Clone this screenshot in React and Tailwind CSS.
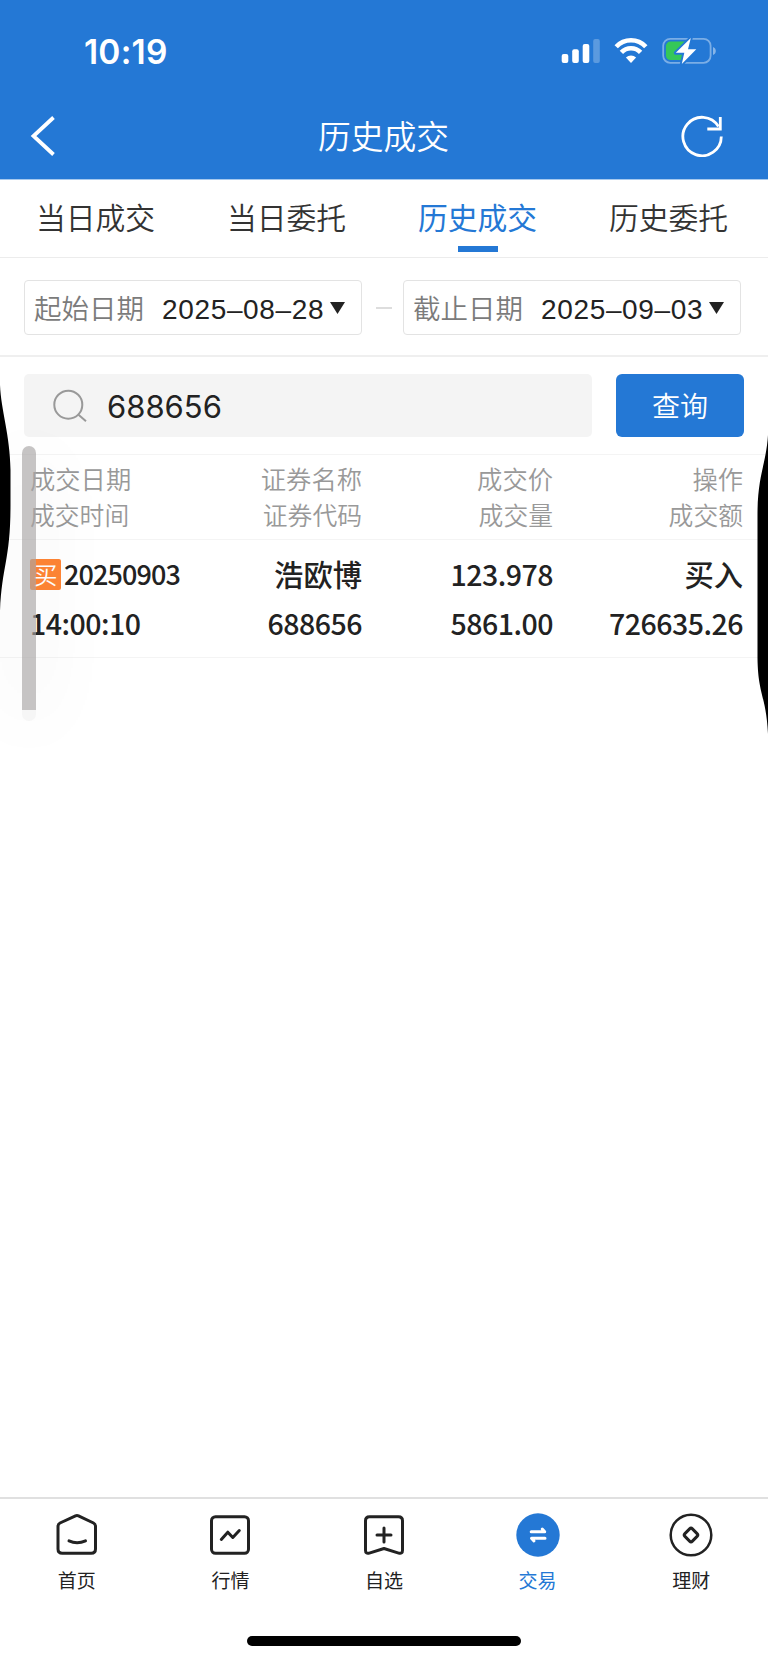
import clsx from 'clsx';

const tabs = ['当日成交', '当日委托', '历史成交', '历史委托'];

const columns = [
  { top: '成交日期', bottom: '成交时间' },
  { top: '证券名称', bottom: '证券代码' },
  { top: '成交价', bottom: '成交量' },
  { top: '操作', bottom: '成交额' },
];

const gridCols = 'grid grid-cols-[171px_161px_191px_190px] pl-[30px] pr-[25px]';

function StatusBar() {
  return (
    <div className="flex h-[94px] items-start justify-between pl-[84px] pr-[51px] text-white">
      <span className="mt-[32px] font-['Inter'] text-[33.5px] leading-[40px] font-semibold tracking-[0.2px]">10:19</span>
      <div className="mt-[36px] flex">
        <svg className="h-[30px] w-[40px]" viewBox="0 0 40 30" fill="currentColor">
          <rect x="0.7" y="18" width="6.6" height="9" rx="2" />
          <rect x="11.2" y="13.3" width="6.6" height="13.7" rx="2" />
          <rect x="21.7" y="8" width="6.6" height="19" rx="2" />
          <rect x="32.2" y="3" width="6.6" height="24" rx="2" opacity="0.25" />
        </svg>
        <svg className="ml-[12px] h-[30px] w-[36px]" viewBox="0 0 36 30" fill="none" stroke="currentColor" strokeWidth="4.6">
          <path d="M3.2 10.7a20.3 20.3 0 0 1 29.6 0" />
          <path d="M8.4 16.4a13.2 13.2 0 0 1 19.2 0" />
          <path d="M12.9 21.6a7.3 7.3 0 0 1 10.2 0L18 27z" fill="currentColor" stroke="none" />
        </svg>
        <svg className="ml-[13px] h-[30px] w-[55px]" viewBox="0 0 55 30" fill="none">
          <rect x="1.2" y="2.8" width="47.4" height="24" rx="7" stroke="#fff" strokeOpacity="0.4" strokeWidth="1.8" />
          <path d="M51 11v8c1.8-.7 2.8-2.2 2.8-4s-1-3.3-2.8-4z" fill="#fff" fillOpacity="0.45" />
          <rect x="3.9" y="5.6" width="24" height="18.5" rx="4.5" fill="#35c759" />
          <path d="M28.8 2 13.8 16.8h8.5L19.8 28 34.3 13.3H26z" fill="#fff" stroke="#2478d5" strokeWidth="3.8" paintOrder="stroke" strokeLinejoin="round" />
        </svg>
      </div>
    </div>
  );
}

function Header() {
  return (
    <header className="h-[180px] border-b border-[#a6c9ee] bg-[#2478d5] text-white">
      <StatusBar />
      <div className="flex h-[84px] items-center justify-between pr-[45px] pl-[30px]">
        <svg className="h-[42px] w-[42px]" viewBox="0 0 42 42" fill="none" stroke="currentColor" strokeWidth="3.8">
          <path d="M23.5 2.5 3.5 21l20 18.5" />
        </svg>
        <h1 className="mb-[3px] ml-[14px] text-[32.8px] leading-[48px] font-[350]">历史成交</h1>
        <svg className="h-[42px] w-[42px]" viewBox="0 0 42 42" fill="none" stroke="currentColor" strokeWidth="2.8">
          <path d="M40.3 21.5A19.2 19.2 0 1 1 37.5 11.5" />
          <path d="M39.3 2v12H26.3" />
        </svg>
      </div>
    </header>
  );
}

function Tabs({ active }) {
  return (
    <nav className="grid h-[78px] grid-cols-4 border-b border-[#ececec] pr-[4px]">
      {tabs.map((tab) => (
        <div key={tab} className="flex flex-col items-center">
          <span
            className={clsx(
              'mt-[14px] text-[29.8px] leading-[44px]',
              tab === active ? 'text-[#2478d5]' : 'font-[350] text-[#333]'
            )}
          >
            {tab}
          </span>
          {tab === active && <span className="mt-[8px] h-[6px] w-[40px] bg-[#2478d5]" />}
        </div>
      ))}
    </nav>
  );
}

function DateField({ label, value }) {
  return (
    <div className="flex h-[55px] w-[338px] items-center rounded-[4px] border border-[#e3e3e3] pl-[9px]">
      <span className="pb-[2px] text-[27.5px] leading-[40px] font-[350] text-[#7b7b7b]">{label}</span>
      <span className="ml-[18px] pt-[4px] font-['Liberation_Sans'] text-[28px] leading-[40px] tracking-[0.65px] text-[#222]">
        {value}
      </span>
      <svg className="ml-[6px] h-[12px] w-[15px]" viewBox="0 0 15 12" fill="#222">
        <path d="M0 0h15L7.5 12z" />
      </svg>
    </div>
  );
}

function SearchRow() {
  return (
    <div className="flex h-[97px] items-start gap-[24px] pt-[17px] pl-[24px]">
      <div className="flex h-[63px] w-[568px] items-center rounded-[5px] bg-[#f4f4f4] pl-[29px]">
        <svg className="h-[34px] w-[34px]" viewBox="0 0 34 34" fill="none" stroke="#999" strokeWidth="2">
          <circle cx="15.3" cy="15.7" r="14" />
          <path d="m25.5 25.7 7.5 6.5" />
        </svg>
        <span className="ml-[20px] pt-[2px] font-['Inter'] text-[31px] leading-[40px] text-[#222]">688656</span>
      </div>
      <button className="h-[63px] w-[128px] rounded-[6px] bg-[#2478d5] pb-[2px] text-[28px] leading-[40px] font-[350] text-white">
        查询
      </button>
    </div>
  );
}

function TableHead() {
  return (
    <div className={clsx(gridCols, 'h-[86px] border-y border-[#f4f4f4] pt-[5px] text-[25.3px] leading-[36px] font-[350] text-[#999]')}>
      {columns.map((col, i) => (
        <div key={col.top} className={clsx('flex flex-col', i > 0 && 'items-end')}>
          <span>{col.top}</span>
          <span className="text-[24.8px]">{col.bottom}</span>
        </div>
      ))}
    </div>
  );
}

function TradeRow() {
  const num = 'text-[28.5px] tracking-[-0.5px]';
  return (
    <div className={clsx(gridCols, 'h-[118px] border-b border-[#f4f4f4] pt-[9px] text-[29.3px] leading-[49px] font-medium text-[#222]')}>
      <div className="flex flex-col">
        <span className="flex h-[49px] items-center">
          <span className="mt-[2px] flex size-[31px] items-center justify-center rounded-[2px] bg-[#ff8534] pb-[3px] text-[24px] font-[350] text-white">
            买
          </span>
          <span className="ml-[3px] text-[27px] tracking-[-0.9px]">20250903</span>
        </span>
        <span className={num}>14:00:10</span>
      </div>
      <div className="flex flex-col items-end">
        <span>浩欧博</span>
        <span className={num}>688656</span>
      </div>
      <div className="flex flex-col items-end">
        <span className={num}>123.978</span>
        <span className={num}>5861.00</span>
      </div>
      <div className="flex flex-col items-end">
        <span>买入</span>
        <span className={num}>726635.26</span>
      </div>
    </div>
  );
}

function NavIcon({ children }) {
  return (
    <svg
      className="size-[44px]"
      viewBox="0 0 44 44"
      fill="none"
      stroke="currentColor"
      strokeWidth="3"
      strokeLinecap="round"
      strokeLinejoin="round"
    >
      {children}
    </svg>
  );
}

const navItems = [
  {
    label: '首页',
    icon: (
      <>
        <path d="M20.5 2.8 5 10Q3 11 3 13.5V36q0 4.3 4.3 4.3h28.9q4.3 0 4.3-4.3V13.5q0-2.5-2-3.5l-15-7.2q-1.5-.7-3 0z" />
        <path d="M14 27.8q8 3.8 16.5 0" />
      </>
    ),
  },
  {
    label: '行情',
    icon: (
      <>
        <rect x="3.5" y="3.7" width="37" height="36.6" rx="4" />
        <path d="m13.3 26.5 6.5-7.3 5 5.3 6.5-7" />
      </>
    ),
  },
  {
    label: '自选',
    icon: (
      <>
        <path d="M7.5 3.7h29q4 0 4 4v29.5q0 4-3.8 2.9L22 35.5 7.3 40.1q-3.8 1.1-3.8-2.9V7.7q0-4 4-4z" />
        <path d="M22 15v14M15 22h14" />
      </>
    ),
  },
  {
    label: '交易',
    icon: (
      <>
        <circle cx="22" cy="22" r="21.7" fill="#2478d5" stroke="none" />
        <path d="M15.2 18.8h13.5l-2.5-2.8M29 25.2H15.5l2.5 2.8" stroke="#fff" />
      </>
    ),
  },
  {
    label: '理财',
    icon: (
      <>
        <circle cx="22" cy="22" r="20.3" strokeWidth="2.5" />
        <rect x="16.7" y="16.7" width="10.6" height="10.6" rx="2" transform="rotate(45 22 22)" />
      </>
    ),
  },
];

function BottomNav({ active }) {
  return (
    <footer className="mt-auto flex h-[166px] flex-col items-center border-t-2 border-[#e0e0e0]">
      <div className="grid w-full grid-cols-5">
        {navItems.map((item) => (
          <div
            key={item.label}
            className={clsx(
              'flex flex-col items-center pt-[14px]',
              item.label === active ? 'text-[#2478d5]' : 'text-[#222]'
            )}
          >
            <NavIcon>{item.icon}</NavIcon>
            <span className="mt-[9px] text-[19px] leading-[28px]">{item.label}</span>
          </div>
        ))}
      </div>
      <div className="mt-[42px] h-[10px] w-[274px] rounded-full bg-black" />
    </footer>
  );
}

export default function App() {
  return (
    <div className="relative flex h-[1663px] w-[768px] flex-col overflow-hidden bg-white font-['Noto_Sans_CJK_SC',sans-serif]">
      <Header />
      <Tabs active="历史成交" />
      <div className="flex h-[99px] items-center border-b-2 border-[#efefef] pt-[2px] pl-[24px]">
        <DateField label="起始日期" value="2025–08–28" />
        <span className="mr-[11px] ml-[14px] h-[2px] w-[16px] bg-[#ddd]" />
        <DateField label="截止日期" value="2025–09–03" />
      </div>
      <SearchRow />
      <TableHead />
      <TradeRow />
      <BottomNav active="交易" />

      {/* floating drag handle with its soft shadow */}
      <div className="absolute top-[446px] left-[22px] h-[264px] w-[14px] rounded-t-full bg-[#a8a4a4]/65 shadow-[0_10px_75px_rgba(0,0,0,0.1)]" />
      <div className="absolute top-[710px] left-[22px] h-[11px] w-[14px] rounded-b-full bg-[#f6f6f6]" />

      {/* dark edges of the display */}
      <svg className="absolute top-[380px] left-0 h-[240px] w-[12px]" viewBox="0 0 12 240">
        <path d="M0 5C1 30 10 55 10.5 90V125C10.5 180 2 185 0 231z" fill="#000" />
      </svg>
      <svg className="absolute top-[430px] right-0 h-[310px] w-[14px]" viewBox="0 0 14 310">
        <path d="M14 5C12 35 3.5 45 3.5 85V228C4 265 12 265 14 304z" fill="#000" />
      </svg>
    </div>
  );
}
